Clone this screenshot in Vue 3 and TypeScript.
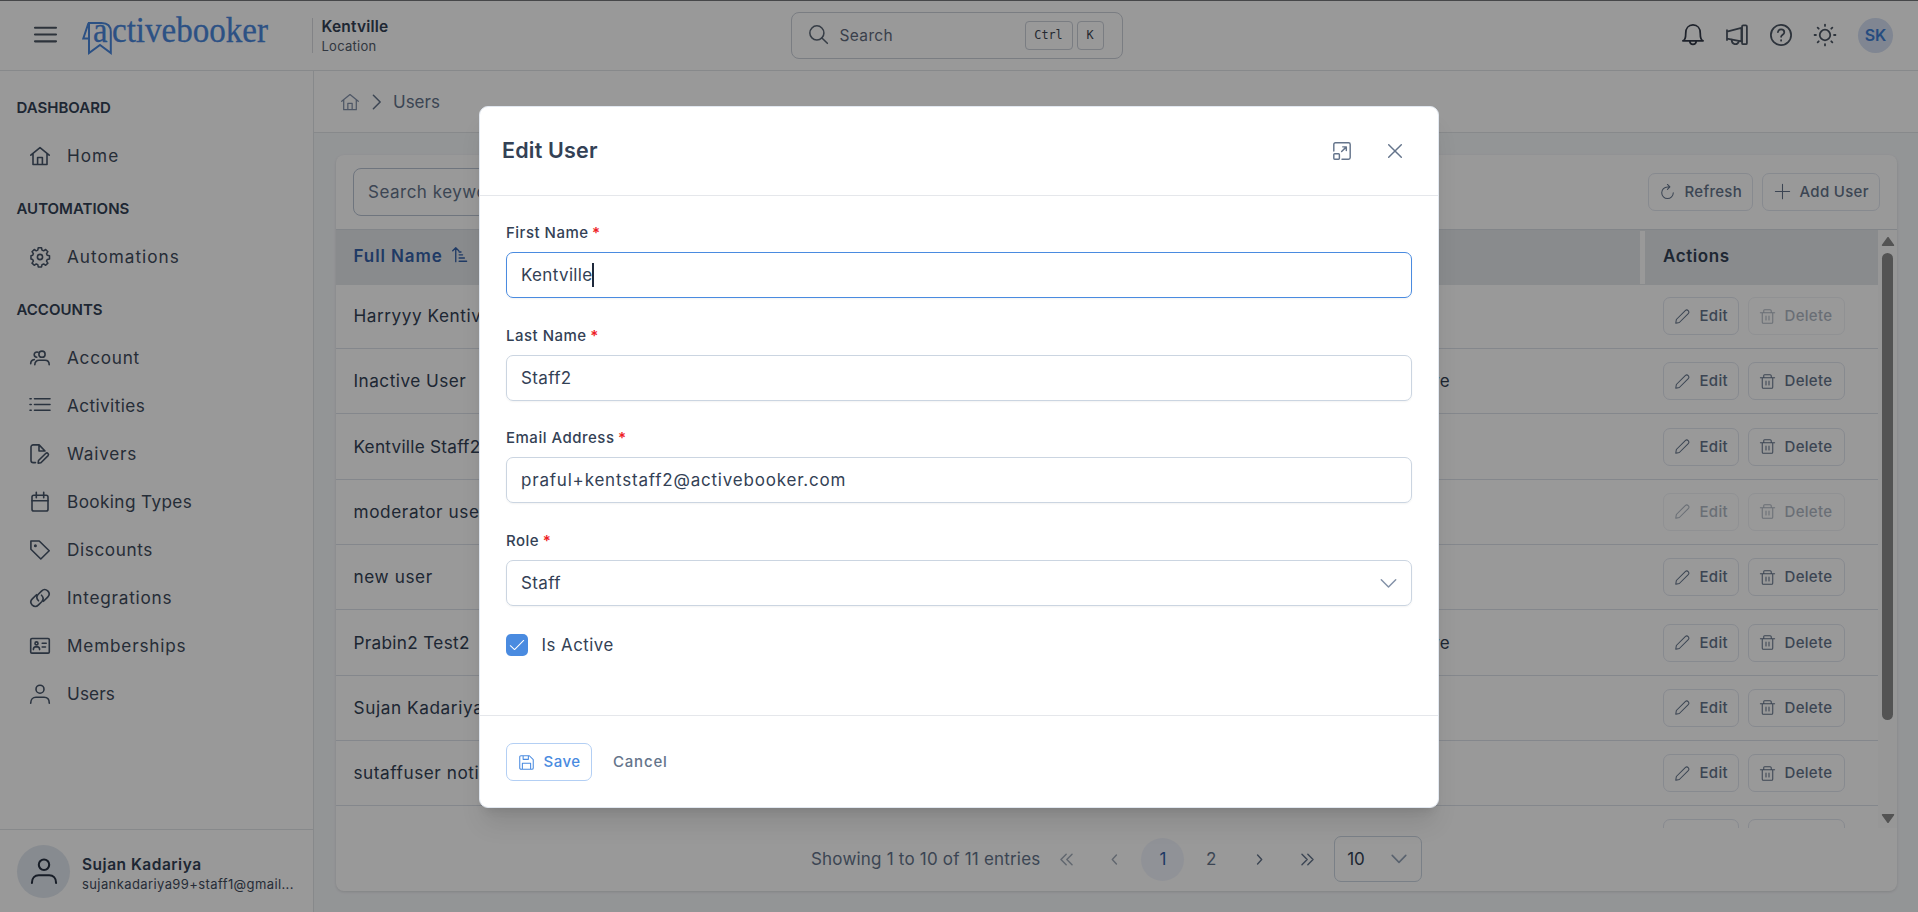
<script setup lang="ts">
import { ref } from 'vue'

interface NavItem { label: string; icon: string; tracking: number }
interface NavGroup { title: string; items: NavItem[] }
interface UserRow { name: string; status: string; canEdit: boolean; canDelete: boolean; tracking: number }

const icons: Record<string, string> = {
  menu: '<path d="M0 3.5h20M0 10h20M0 16.5h20"/>',
  home: '<path d="M.8 9.2 10 1.7l9.200 7.500M3 7.500v11h14v-11M7.600 18.500v-7h4.800v7"/>',
  gear: '<circle cx="10" cy="10" r="2.600"/><path d="M8.300 1h3.400l.5 2.500 1.700.7 2.100-1.400 2.300 2.300-1.400 2.100.7 1.600 2.400.5v3.400l-2.400.5-.7 1.700 1.400 2.100-2.300 2.300-2.100-1.400-1.700.7-.5 2.400H8.300l-.5-2.400-1.600-.7L4.100 19.300 1.800 17l1.400-2.100-.7-1.700L.7 12.700V9.300l1.800-.5.7-1.600-1.400-2.100 2.300-2.300 2.100 1.400 1.600-.7z" transform="translate(.3 -.2) scale(.96)"/>',
  users: '<circle cx="12" cy="6.200" r="3.100"/><path d="M4.800 16.800c0-3.200 2-4.500 4.200-4.500h6c2.300 0 4.200 1.300 4.200 4.500M8 4.200C6 3.600 4.200 4.700 4.200 6.600c0 1.600 1.200 2.600 2.600 2.700M.7 15.800c0-2.700 1.300-4 3.600-4.200"/>',
  list: '<path d="M4.500 2.700H20M4.500 8.500H20M4.500 14.300H20M0 2.700h1.200M0 8.500h1.200M0 14.300h1.200"/>',
  fileEdit: '<path d="M5.500 18.600H3.200C1.900 18.600 1 17.700 1 16.500V3C1 1.800 1.900.9 3.200.9h5.900L15 7M9 .9V7h6M8.200 19.200l.3-2.700 7.400-7.200c1.400-1.100 3.400.8 2.200 2.300L10.900 18.800z"/>',
  calendar: '<rect x="2" y="3.300" width="16" height="15.700" rx="1.800"/><path d="M2 8.800h16M6.300.3v5.500M13.700.3v5.500"/>',
  tag: '<path d="M.9 1h8.300L19.200 10.800 10.800 19 .9 9.300z"/><circle cx="5.400" cy="5.700" r=".7"/>',
  link: '<path d="M8.500 12.800c-2-2-2-4.600-.2-6.500l3.200-3.200c1.900-1.900 4.500-1.800 6.200-.2 1.800 1.800 1.800 4.400 0 6.200l-4.200 4.200M11.500 7.200c2 2 2 4.600.2 6.500l-3.200 3.200c-1.900 1.900-4.500 1.800-6.200.2-1.800-1.800-1.800-4.400 0-6.200l4.200-4.200"/>',
  idCard: '<rect x=".7" y="2.500" width="18.600" height="14.600" rx="1.200"/><circle cx="6.500" cy="7.400" r="1.500"/><path d="M3.400 13.600c0-2 1-2.700 2-2.700h2.200c1 0 2 .7 2 2.700M12.200 7.300h4M12.200 11h3.300"/>',
  user: '<circle cx="10" cy="5.200" r="4"/><path d="M.7 19.200c0-4.100 2.400-5.900 5.200-5.900h8.200c2.800 0 5.200 1.800 5.200 5.900"/>',
  chevronRight: '<path d="m6 2.500 7.500 7.500L6 17.500"/>',
  chevronDown: '<path d="m1.500 5.500 8.500 8.700 8.500-8.700"/>',
  search: '<circle cx="8.300" cy="8.300" r="7.400"/><path d="m13.600 13.600 5.700 5.700"/>',
  bell: '<path d="M.8 15.300c2.300-.7 2.600-3 2.600-7C3.400 4 6 .9 10 .9S16.600 4 16.600 8.300c0 4 .3 6.300 2.600 7zM7 15.500c.3 2.200 1.300 3 3 3s2.700-.8 3-3"/>',
  megaphone: '<path d="M.9 5.600v9M.9 6.900 14 3.600v12.200L.9 13.200"/><rect x="14.600" y="1.200" width="4.400" height="17.200" rx="1"/><path d="M5.200 14.300c-.1 4.300 4.900 5.700 6.500 1.500"/>',
  help: '<circle cx="10" cy="10" r="9.200"/><path d="M7.200 7.400c.2-1.700 1.300-2.600 2.900-2.600 1.700 0 2.900 1 2.900 2.600 0 2.200-2.900 2.400-2.900 4.300M10.100 14.600v.6"/>',
  sun: '<circle cx="10" cy="10" r="4.800"/><path d="M10 .5v1.300M10 18.200v1.300M.5 10h1.300M18.200 10h1.300M3.300 3.300l1 1M15.700 15.700l1 1M3.300 16.700l1-1M15.700 4.300l1-1"/>',
  sort: '<path d="M5 19.500V1M1 5l4-4 4 4M9.500 19h10M9.500 14.700h7M9.500 10.400h4.600M9.500 6.600h2.500"/>',
  refresh: '<path d="M12.800 3.900H10a7.700 7.700 0 1 0 7.700 7.700M9.900.6l3.300 3.300-3.300 3.300"/>',
  plus: '<path d="M10 .5v19M.5 10h19"/>',
  pencil: '<path d="M1 19l.8-5L14 1.800c2.300-2 6 1.500 4 4L5.800 18z"/>',
  trash: '<path d="M.5 5h19M3 5v12.500c0 .8.700 1.500 1.500 1.500h11c.8 0 1.500-.7 1.500-1.500V5M5 5V2.200C5 1.400 5.700.9 6.500.9h7c.8 0 1.500.5 1.500 1.300V5M8 9.500v5M12 9.500v5"/>',
  maximize: '<path d="M.9 10V2.700C.9 1.600 1.600.9 2.700.9h14.600c1.100 0 1.800.7 1.800 1.800v14.600c0 1.100-.7 1.800-1.800 1.800H10M10.800 5.400h4v4M14.500 5.700 9.600 10.600"/><rect x=".9" y="13" width="6.200" height="6.100" rx="1"/>',
  close: '<path d="m1 1 18 18M19 1 1 19"/>',
  save: '<path d="M2.500 1h11.300L19 6.200v11c0 1.100-.8 1.800-1.800 1.800H2.800C1.700 19 1 18.300 1 17.200V2.500C1 1.600 1.600 1 2.500 1zM4.500 19v-8h11v8M5.500 1v4.800h7V1"/>',
  check: '<path d="m.5 11 6 5.500L19.500 3.500"/>',
  first: '<path d="m9.500 2-8 8 8 8M18.500 2l-8 8 8 8"/>',
  last: '<path d="m1.500 2 8 8-8 8M10.500 2l8 8-8 8"/>',
  prev: '<path d="m13.500 2-7.500 8 7.500 8"/>',
  next: '<path d="m6.500 2 7.500 8-7.500 8"/>',
}

const nav: NavGroup[] = [
  { title: 'DASHBOARD', items: [{ label: 'Home', icon: 'home', tracking: 1 }] },
  { title: 'AUTOMATIONS', items: [{ label: 'Automations', icon: 'gear', tracking: 1 }] },
  {
    title: 'ACCOUNTS',
    items: [
      { label: 'Account', icon: 'users', tracking: 0.75 },
      { label: 'Activities', icon: 'list', tracking: 0.4 },
      { label: 'Waivers', icon: 'fileEdit', tracking: 0.77 },
      { label: 'Booking Types', icon: 'calendar', tracking: 0.38 },
      { label: 'Discounts', icon: 'tag', tracking: 0.6 },
      { label: 'Integrations', icon: 'link', tracking: 0.75 },
      { label: 'Memberships', icon: 'idCard', tracking: 0.8 },
      { label: 'Users', icon: 'user', tracking: 0.1 },
    ],
  },
]

const rows: UserRow[] = [
  { name: 'Harryyy Kentiville', status: '', canEdit: true, canDelete: false, tracking: 0.55 },
  { name: 'Inactive User', status: 'Inactive', canEdit: true, canDelete: true, tracking: 0.48 },
  { name: 'Kentville Staff2', status: '', canEdit: true, canDelete: true, tracking: 0.25 },
  { name: 'moderator user', status: '', canEdit: false, canDelete: false, tracking: 0.6 },
  { name: 'new user', status: '', canEdit: true, canDelete: true, tracking: 0.6 },
  { name: 'Prabin2 Test2', status: 'Inactive', canEdit: true, canDelete: true, tracking: 0.31 },
  { name: 'Sujan Kadariya', status: '', canEdit: true, canDelete: true, tracking: 0.6 },
  { name: 'sutaffuser noti', status: '', canEdit: true, canDelete: true, tracking: 0.55 },
]

const fields = [
  { label: 'First Name', value: 'Kentville', focused: true, select: false },
  { label: 'Last Name', value: 'Staff2', focused: false, select: false },
  { label: 'Email Address', value: 'praful+kentstaff2@activebooker.com', focused: false, select: false },
  { label: 'Role', value: 'Staff', focused: false, select: true },
]

const active = ref(true)
</script>

<template>
  <div class="page">
    <header class="topbar">
      <svg class="ic menu" viewBox="0 0 20 20" v-html="icons.menu" />
      <svg class="logo" viewBox="0 0 188 42">
        <path d="M7 37V7H19.500C25.500 7 28.800 10.500 28.800 16V37L18 29ZM6.500 7 1.300 22.500H7" />
        <text x="11" y="25.500" textLength="14.500" lengthAdjust="spacingAndGlyphs">a</text>
        <text x="30" y="25.500" textLength="156" lengthAdjust="spacingAndGlyphs">ctivebooker</text>
      </svg>
      <div class="location">
        <strong>Kentville</strong>
        <span>Location</span>
      </div>
      <div class="global-search">
        <svg class="ic" viewBox="0 0 20 20" v-html="icons.search" />
        <span>Search</span>
        <kbd>Ctrl</kbd><kbd class="key">K</kbd>
      </div>
      <div class="tools">
        <svg class="ic strong" viewBox="0 0 20 20" v-html="icons.bell" />
        <svg class="ic" viewBox="0 0 20 20" v-html="icons.megaphone" />
        <svg class="ic" viewBox="0 0 20 20" v-html="icons.help" />
        <svg class="ic" viewBox="0 0 20 20" v-html="icons.sun" />
        <span class="avatar">SK</span>
      </div>
    </header>

    <div class="body">
      <aside class="sidebar">
        <nav>
          <template v-for="group in nav" :key="group.title">
            <h3>{{ group.title }}</h3>
            <a v-for="item in group.items" :key="item.label" :style="{ letterSpacing: item.tracking + 'px' }">
              <svg class="ic" viewBox="0 0 20 20" v-html="icons[item.icon]" />{{ item.label }}
            </a>
          </template>
        </nav>
        <div class="profile">
          <span class="profile-pic"><svg class="ic" viewBox="0 0 20 20" v-html="icons.user" /></span>
          <div>
            <strong>Sujan Kadariya</strong>
            <span>sujankadariya99+staff1@gmail...</span>
          </div>
        </div>
      </aside>

      <main>
        <div class="crumbs">
          <svg class="ic crumb-home" viewBox="0 0 20 20" v-html="icons.home" />
          <svg class="ic crumb-sep" viewBox="0 0 20 20" v-html="icons.chevronRight" />
          <span>Users</span>
        </div>
        <section class="card">
          <div class="toolbar">
            <div class="keyword">Search keyword</div>
            <button class="btn refresh"><svg class="ic" viewBox="0 0 20 20" v-html="icons.refresh" />Refresh</button>
            <button class="btn add"><svg class="ic" viewBox="0 0 20 20" v-html="icons.plus" />Add User</button>
          </div>
          <div class="table-wrap">
            <div class="table">
              <div class="thead">
                <span class="sorted">Full Name <svg class="ic" viewBox="0 0 20 20" v-html="icons.sort" /></span>
                <i class="divider" />
                <span class="actions-head">Actions</span>
              </div>
              <div v-for="row in rows" :key="row.name" class="row">
                <span class="name" :style="{ letterSpacing: row.tracking + 'px' }">{{ row.name }}</span>
                <span class="status">{{ row.status }}</span>
                <div class="row-actions">
                  <button class="btn edit" :class="{ disabled: !row.canEdit }">
                    <svg class="ic" viewBox="0 0 20 20" v-html="icons.pencil" />Edit
                  </button>
                  <button class="btn delete" :class="{ disabled: !row.canDelete }">
                    <svg class="ic" viewBox="0 0 20 20" v-html="icons.trash" />Delete
                  </button>
                </div>
              </div>
              <div class="row">
                <span class="name" />
                <span class="status" />
                <div class="row-actions">
                  <button class="btn edit" />
                  <button class="btn delete" />
                </div>
              </div>
            </div>
            <div class="scrollbar">
              <svg viewBox="0 0 13 10"><path d="M6.500 1.500 11.500 8.500h-10z" /></svg>
              <i />
              <svg viewBox="0 0 13 10"><path d="M6.500 8.500 11.500 1.500h-10z" /></svg>
            </div>
          </div>
          <div class="paginator">
            <span class="summary">Showing 1 to 10 of 11 entries</span>
            <span class="page-btn off"><svg class="ic wide" viewBox="0 0 20 20" v-html="icons.first" /></span>
            <span class="page-btn off"><svg class="ic" viewBox="0 0 20 20" v-html="icons.prev" /></span>
            <span class="page-btn current">1</span>
            <span class="page-btn">2</span>
            <span class="page-btn"><svg class="ic" viewBox="0 0 20 20" v-html="icons.next" /></span>
            <span class="page-btn"><svg class="ic wide" viewBox="0 0 20 20" v-html="icons.last" /></span>
            <div class="page-size">10<svg class="ic" viewBox="0 0 20 20" v-html="icons.chevronDown" /></div>
          </div>
        </section>
      </main>
    </div>

    <div class="mask">
      <div class="dialog">
        <div class="dialog-head">
          <h2>Edit User</h2>
          <svg class="ic max" viewBox="0 0 20 20" v-html="icons.maximize" />
          <svg class="ic close" viewBox="0 0 20 20" v-html="icons.close" />
        </div>
        <div class="dialog-body">
          <div v-for="field in fields" :key="field.label" class="field">
            <label>{{ field.label }} <b>*</b></label>
            <div class="input" :class="{ focused: field.focused, email: field.label === 'Email Address' }">
              <span>{{ field.value }}</span><i v-if="field.focused" class="caret" />
              <svg v-if="field.select" class="ic" viewBox="0 0 20 20" v-html="icons.chevronDown" />
            </div>
          </div>
          <div class="check-row" @click="active = !active">
            <span class="checkbox"><svg v-if="active" class="ic" viewBox="0 0 20 20" v-html="icons.check" /></span>
            <span class="check-label">Is Active</span>
          </div>
        </div>
        <div class="dialog-foot">
          <button class="btn save"><svg class="ic" viewBox="0 0 20 20" v-html="icons.save" />Save</button>
          <span class="cancel">Cancel</span>
        </div>
      </div>
    </div>
  </div>
</template>

<style>
body { overflow: hidden; }
</style>

<style scoped>
.page, .page * { box-sizing: border-box; }
.page {
  width: 1918px; height: 912px; overflow: hidden; display: flex; flex-direction: column;
  font-family: Inter, "Liberation Sans", sans-serif; font-size: 17px; line-height: 24px;
  color: #334155; background: #fff; border-top: 1px solid #75777b;
}
.ic { display: block; flex: none; width: 20px; height: 20px; fill: none; stroke: currentColor; stroke-width: 1.4; stroke-linecap: round; stroke-linejoin: round; overflow: visible; }
h2, h3 { margin: 0; }
button { font: inherit; }

.topbar { height: 70px; flex: none; display: flex; align-items: center; border-bottom: 1px solid #e2e4e8; }
.menu { width: 21px; height: 21px; margin-left: 34.500px; stroke-width: 2; color: #4b5563; margin-top: -2px; }
.logo { width: 188px; height: 42px; margin: 2px 42px 0 26px; fill: none; stroke: #4a87dd; stroke-width: 2; overflow: visible; }
.logo text { font-family: "Liberation Serif", serif; font-size: 36px; fill: #4a87dd; stroke: #4a87dd; stroke-width: .3; }
.location { height: 35px; border-left: 1px solid #d9dbdf; padding-left: 9px; width: 479px; display: flex; flex-direction: column; justify-content: center; }
.location strong { font-size: 15.500px; line-height: 20px; font-weight: 600; letter-spacing: .2px; padding-top: 1px; }
.location span { font-size: 13px; line-height: 19px; color: #525c6b; letter-spacing: .25px; }
.global-search { width: 332px; height: 47px; border: 1px solid #cbd0d9; border-radius: 8px; display: flex; align-items: center; padding: 0 18px 0 17px; color: #5f6b7e; font-size: 15.500px; letter-spacing: .35px; }
.global-search .ic { width: 19px; height: 19px; margin-top: -2px; color: #5b6675; stroke-width: 1.600; }
.global-search span { margin-left: 12px; flex: 1; }
kbd { font: 11.800px/27px "DejaVu Sans Mono", monospace; letter-spacing: 0; width: 48px; height: 29px; text-align: center; border: 1px solid #cbd0d9; border-radius: 4px; color: #3d4552; }
.key { width: 27px; margin-left: 4px; }
.tools { margin-left: auto; display: flex; align-items: center; gap: 22px; padding-right: 25px; color: #4b5563; }
.tools .ic { width: 22px; height: 22px; margin-top: -2px; stroke-width: 1.600; }
.tools .strong { color: #333a48; }
.avatar { width: 35px; height: 35px; border-radius: 50%; background: #d5e0f4; color: #3f7fd6; font-size: 16px; font-weight: 600; line-height: 35px; text-align: center; }

.body { flex: 1; min-height: 0; display: flex; }
.sidebar { width: 314px; border-right: 1px solid #e2e4e8; display: flex; flex-direction: column; }
nav { padding-top: 8px; flex: 1; }
nav h3 { height: 53px; padding: 15.500px 0 0 16.500px; font-size: 15px; line-height: 26px; font-weight: 600; }
nav a { height: 48.050px; display: flex; align-items: center; padding-left: 30px; font-size: 17.200px; color: #3f4b5d; }
nav a .ic { margin: -1px 17px 0 0; color: #475569; stroke-width: 1.600; }
.profile { height: 83px; border-top: 1px solid #e2e4e8; padding-left: 17px; display: flex; align-items: center; gap: 12px; }
.profile-pic { width: 53px; height: 53px; border-radius: 50%; background: #e2e8f0; display: flex; align-items: center; justify-content: center; color: #273142; }
.profile-pic .ic { width: 26px; height: 26px; stroke-width: 1.600; }
.profile strong { display: block; font-size: 15.500px; line-height: 21px; font-weight: 600; letter-spacing: .5px; padding-top: 5px; }
.profile div span { display: block; font-size: 13px; line-height: 18px; color: #3f4b5d; letter-spacing: .4px; }

main { flex: 1; background: #f6f8fb; display: flex; flex-direction: column; }
.crumbs { height: 62px; flex: none; background: #fff; border-bottom: 1px solid #e2e4e8; display: flex; align-items: center; padding-left: 27px; color: #64748b; }
.crumb-home { width: 18px; height: 18px; color: #8492ab; }
.crumb-sep { width: 18px; height: 18px; margin: 0 7px 0 9px; stroke-width: 1.700; }
.card { margin: 21.500px 21px 0 22px; height: 736.500px; background: #fff; border-radius: 8px; box-shadow: 0 1px 3px rgba(0,0,0,.12); display: flex; flex-direction: column; }
.toolbar { height: 74.500px; flex: none; display: flex; align-items: center; padding: 0 17px; }
.keyword { width: 420px; height: 48px; border: 1px solid #b9c3d3; border-radius: 8px; padding: 0 14px; line-height: 46px; color: #64748b; letter-spacing: .5px; }
.btn { height: 38px; background: transparent; border: 1px solid #e2e6ef; border-radius: 7px; color: #64748b; font-size: 15px; font-weight: 500; letter-spacing: .3px; display: flex; align-items: center; padding: 0 0 0 11px; white-space: nowrap; }
.btn .ic { width: 15px; height: 15px; margin-right: 9.500px; }
.refresh { width: 105px; margin-left: auto; margin-right: 9px; }
.add { width: 118px; padding-left: 12px; }
.table-wrap { height: 599px; flex: none; display: flex; border-top: 1px solid #d9dee5; overflow: hidden; }
.table { flex: 1; overflow: hidden; }
.thead { height: 54.500px; background: #e5e8ec; display: flex; align-items: center; font-size: 17px; font-weight: 600; color: #334155; }
.sorted { display: flex; align-items: center; gap: 9px; padding: 0 0 3px 17.500px; width: 1304px; color: #3561a8; letter-spacing: .9px; }
.sorted .ic { width: 15px; height: 15px; margin-top: -3px; stroke-width: 1.800; }
.divider { width: 5px; height: 53px; background: #fff; }
.actions-head { margin-left: 18px; padding-bottom: 3px; letter-spacing: .6px; }
.row { height: 65.300px; border-bottom: 1px solid #dce1ea; display: flex; align-items: center; }
.row:nth-child(2) { height: 64.700px; }
.name { width: 600px; padding: 0 0 0 17.500px; font-size: 17.200px; white-space: nowrap; }
.status { width: 514px; text-align: right; letter-spacing: .3px; }
.row-actions { margin-left: 213px; display: flex; gap: 9px; }
.edit { width: 76px; }
.delete { width: 97px; }
.disabled { opacity: .5; }
.scrollbar { width: 19px; background: #fcfcfc; display: flex; flex-direction: column; align-items: center; padding: 6px 0 4px; fill: #8a8a8a; }
.scrollbar svg { width: 14px; height: 11px; stroke: #8a8a8a; stroke-width: 1.500; stroke-linejoin: round; }
.scrollbar i { width: 11px; height: 467px; background: #8a8a8a; border-radius: 6px; margin: 6px 0 auto; }
.paginator { flex: 1; display: flex; align-items: center; padding: 0 0 1px 475px; color: #64748b; }
.summary { width: 234px; white-space: nowrap; letter-spacing: .2px; }
.page-btn { width: 43px; height: 43px; margin-right: 5.200px; border-radius: 50%; display: flex; align-items: center; justify-content: center; }
.page-btn .ic { width: 11px; height: 11px; stroke-width: 2.600; }
.page-btn .wide { width: 13px; height: 13px; stroke-width: 2.200; }
.off { opacity: .6; }
.current { background: #f1f4fc; color: #3561a8; }
.page-size { width: 88px; height: 46px; border: 1px solid #cbd5e1; border-radius: 7px; display: flex; align-items: center; justify-content: space-between; padding: 0 14px 0 12px; color: #334155; }
.page-size .ic { width: 16px; height: 16px; color: #94a3b8; stroke-width: 2; }

.mask { position: absolute; inset: 0; width: 1918px; height: 912px; background: rgba(0,0,0,.4); padding: 106px 0 0 479px; }
.dialog { width: 960px; height: 702px; background: #fff; border: 1px solid #e2e8f0; border-radius: 9px; box-shadow: 0 20px 25px -5px rgba(0,0,0,.1), 0 8px 10px -6px rgba(0,0,0,.1); display: flex; flex-direction: column; }
.dialog-head { height: 89px; border-bottom: 1px solid #e5e7eb; padding: 0 36px 0 22px; display: flex; align-items: center; color: #64748b; }
.dialog-head h2 { flex: 1; font-size: 21.500px; font-weight: 600; color: #334155; margin-top: -3px; letter-spacing: .2px; }
.max { width: 18px; height: 18px; stroke-width: 1.600; }
.close { width: 14px; height: 14px; margin-left: 37px; stroke-width: 2.100; }
.dialog-body { flex: 1; padding: 24px 26px 0; }
.field { height: 102.700px; }
.field label { display: block; height: 32px; font-size: 15px; line-height: 26px; font-weight: 500; letter-spacing: .5px; }
.field b { color: #ee1c25; font-weight: 600; margin-left: -1px; }
.input { height: 46px; border: 1px solid #cbd5e1; border-radius: 7px; padding: 0 14px; display: flex; align-items: center; box-shadow: 0 1px 2px rgba(18,18,23,.05); letter-spacing: .35px; }
.email { letter-spacing: .8px; }
.input .ic { width: 17px; height: 17px; margin-left: auto; color: #8391a7; stroke-width: 1.700; }
.focused { border-color: #4a8be0; }
.caret { width: 2px; height: 24px; margin-left: -.5px; background: #1e293b; }
.check-row { display: flex; align-items: center; gap: 13.500px; padding-top: 2px; }
.check-label { font-size: 16.800px; letter-spacing: .5px; }
.checkbox { width: 22px; height: 22px; border-radius: 5px; background: #4a8be0; color: #fff; display: flex; align-items: center; justify-content: center; }
.checkbox .ic { width: 14px; height: 14px; stroke-width: 1.500; }
.dialog-foot { height: 92px; border-top: 1px solid #e5e7eb; padding: 27px 26px 0; display: flex; }
.save { width: 86px; color: #4a8be0; border-color: #b3cff4; padding-left: 12px; letter-spacing: .5px; }
.cancel { margin-left: 21px; line-height: 37px; font-size: 15px; font-weight: 500; color: #64748b; letter-spacing: .8px; }
</style>
